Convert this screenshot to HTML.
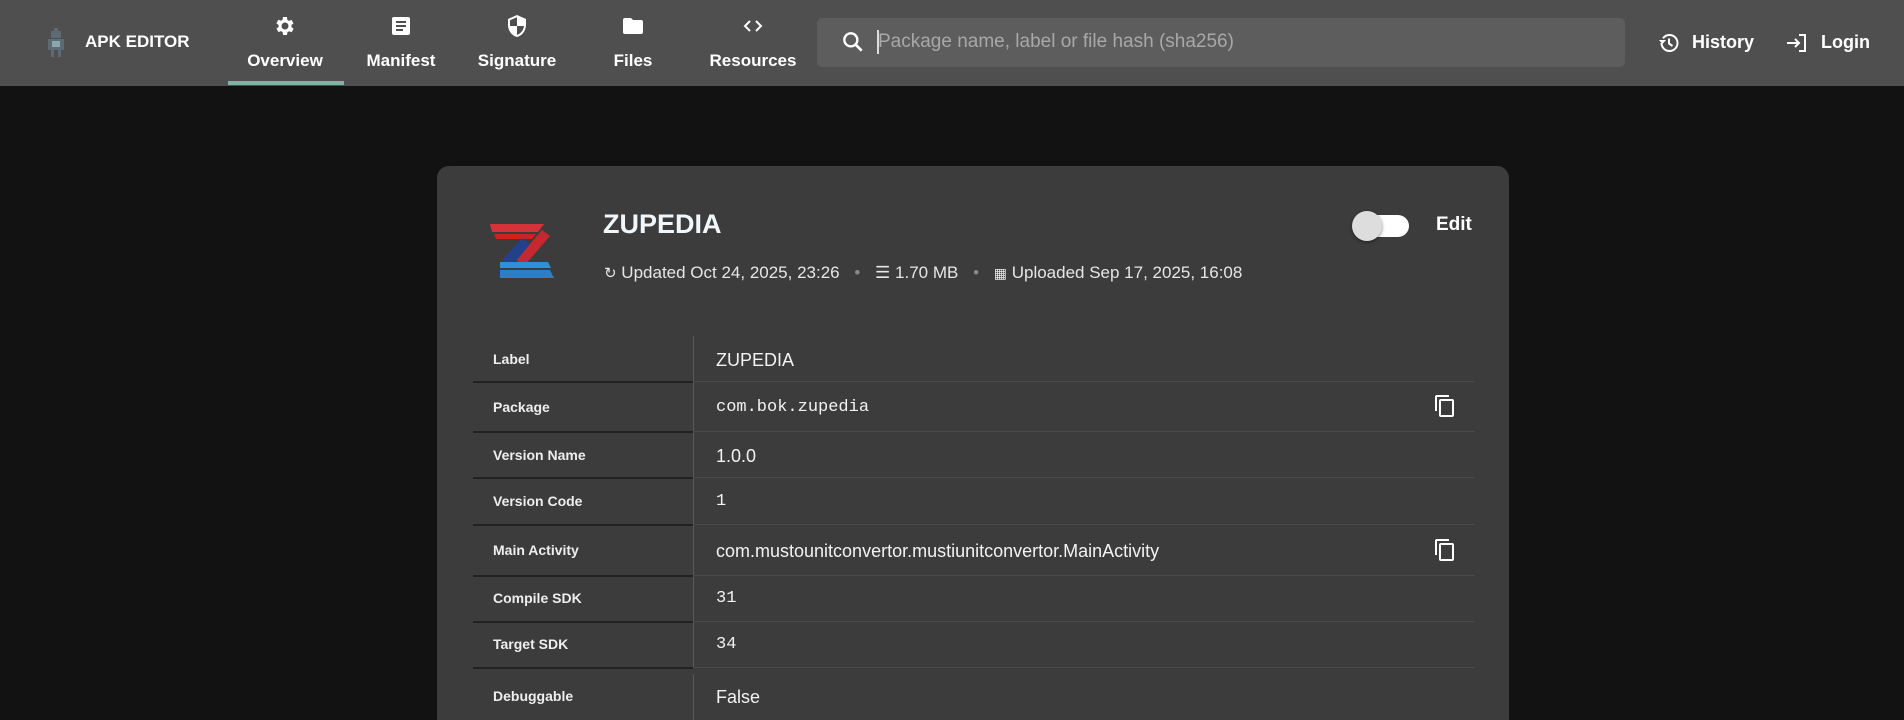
<!DOCTYPE html>
<html><head><meta charset="utf-8"><style>
*{box-sizing:border-box;margin:0;padding:0}
html{width:1904px;height:720px;overflow:hidden}
body{width:1904px;height:720px;overflow:hidden;background:#121212;font-family:"Liberation Sans",sans-serif;color:#fff;position:relative}
.hdr{position:absolute;left:0;top:0;width:1904px;height:86px;background:#4f4f4f}
.abs{position:absolute}
.nav{position:absolute;top:14px;width:120px;text-align:center;font-weight:bold;font-size:17px}
.nav svg{display:block;margin:0 auto 13px}
.search{position:absolute;left:817px;top:18px;width:808px;height:49px;background:#5d5d5d;border-radius:5px}
.card{position:absolute;left:437px;top:166px;width:1072px;height:554px;background:#3c3c3c;border-radius:12px 12px 0 0}
.row{position:absolute;left:473px;width:1002px}
.lab{position:absolute;left:20px;font-size:14px;font-weight:bold;color:#eee}
.val{position:absolute;left:243px;font-size:18px;color:#f2f2f2}
.mono{font-family:"Liberation Mono",monospace;font-size:17px}
.bl{position:absolute;left:0;width:220px;height:2px;background:#222}
.br{position:absolute;left:220px;width:782px;height:1px;background:#4a4a4a}
</style></head><body>
<div class="hdr"></div>
<svg class="abs" style="left:47px;top:28px" width="18" height="30" viewBox="0 0 18 30"><rect x="7" y="0" width="4" height="3" fill="#5e6a74"/><rect x="4" y="3" width="10" height="7" fill="#5e6a74"/><rect x="1" y="11" width="16" height="11" fill="#5e6a74"/><rect x="5" y="13" width="8" height="6" fill="#8aa"/><rect x="4" y="22" width="3" height="7" fill="#5e6a74"/><rect x="11" y="22" width="3" height="7" fill="#5e6a74"/></svg>
<div class="abs" style="left:85px;top:32px;font-size:17px;font-weight:bold">APK EDITOR</div>

<div class="nav" style="left:225px"><svg width="24" height="24" viewBox="0 0 24 24"><path fill="#fff" d="M19.4 13a7.5 7.5 0 000-2l2.1-1.6-2-3.5-2.5 1a7 7 0 00-1.7-1L15 3h-4l-.4 2.8a7 7 0 00-1.7 1l-2.5-1-2 3.5L6.6 11a7.5 7.5 0 000 2l-2.1 1.6 2 3.5 2.5-1a7 7 0 001.7 1L11 21h4l.4-2.8a7 7 0 001.7-1l2.5 1 2-3.5zM13 15.5a3.5 3.5 0 110-7 3.5 3.5 0 010 7z" transform="translate(-1 0)"/></svg>Overview</div>
<div class="abs" style="left:228px;top:81px;width:116px;height:4px;background:#7ab5a6"></div>
<div class="nav" style="left:341px"><svg width="24" height="24" viewBox="0 0 24 24"><path fill="#fff" d="M5 3h14a2 2 0 012 2v14a2 2 0 01-2 2H5a2 2 0 01-2-2V5a2 2 0 012-2zm2 4v2h10V7zm0 4v2h10v-2zm0 4v2h7v-2z"/></svg>Manifest</div>
<div class="nav" style="left:457px"><svg width="24" height="24" viewBox="0 0 24 24"><path fill="#fff" d="M12 1L3 5v6c0 5.5 3.8 10.7 9 12 5.2-1.3 9-6.5 9-12V5zm0 11h7c-.5 4.1-3.3 7.8-7 8.9zM12 12H5V6.3l7-3.1z"/></svg>Signature</div>
<div class="nav" style="left:573px"><svg width="24" height="24" viewBox="0 0 24 24"><path fill="#fff" d="M10 4H4a2 2 0 00-2 2v12a2 2 0 002 2h16a2 2 0 002-2V8a2 2 0 00-2-2h-8z"/></svg>Files</div>
<div class="nav" style="left:693px"><svg width="24" height="24" viewBox="0 0 24 24"><path fill="none" stroke="#fff" stroke-width="2" d="M9 7l-5 5 5 5M15 7l5 5-5 5"/></svg>Resources</div>

<div class="search"></div>
<svg class="abs" style="left:840px;top:29px" width="26" height="26" viewBox="0 0 24 24"><circle cx="10" cy="10" r="6" fill="none" stroke="#fff" stroke-width="2.2"/><path d="M14.5 14.5L20 20" stroke="#fff" stroke-width="2.4"/></svg>
<div class="abs" style="left:877px;top:30px;width:2px;height:24px;background:#ddd"></div>
<div class="abs" style="left:878px;top:31px;font-size:19px;color:#a8a8a8">Package name, label or file hash (sha256)</div>

<svg class="abs" style="left:1657px;top:31px" width="24" height="24" viewBox="0 0 24 24"><path fill="none" stroke="#fff" stroke-width="2" d="M4.5 12a8 8 0 108-8 8 8 0 00-6.5 3.3"/><path fill="#fff" d="M2 9l3.5 4L9 9z"/><path fill="none" stroke="#fff" stroke-width="2" d="M12 7.5v5l3.5 2.5"/></svg>
<div class="abs" style="left:1692px;top:32px;font-size:18px;font-weight:bold">History</div>
<svg class="abs" style="left:1785px;top:31px" width="24" height="24" viewBox="0 0 24 24"><path fill="none" stroke="#fff" stroke-width="2" d="M2 12h12M10 8l4 4-4 4M14 4h6v16h-6"/></svg>
<div class="abs" style="left:1821px;top:32px;font-size:18px;font-weight:bold">Login</div>

<div class="card"></div>
<svg class="abs" style="left:486px;top:222px" width="72" height="60" viewBox="0 0 72 60"><path d="M4 2h54l-6 8H6z" fill="#d5333a"/><path d="M8 12h42l-4 5H10z" fill="#c22"/><path d="M56 8l8 6-26 30-8-6z" fill="#c5282f"/><path d="M36 16l8 6-18 22-10-6z" fill="#23408a"/><path d="M14 40h48l3 6H14z" fill="#2f8fd8"/><path d="M14 48h50l4 8H14z" fill="#2a7fcc"/></svg>
<div class="abs" style="left:603px;top:209px;font-size:27px;font-weight:bold;color:#f0f6fa">ZUPEDIA</div>
<div class="abs" style="left:604px;top:263px;font-size:17px;color:#e6e6e6;white-space:nowrap">
<span style="font-size:15px">&#x21bb;</span> Updated Oct 24, 2025, 23:26 <span style="color:#888;margin:0 10px">•</span> <span>&#x2630;</span> 1.70 MB <span style="color:#888;margin:0 10px">•</span> <span style="font-size:14px">&#x25A6;</span> Uploaded Sep 17, 2025, 16:08</div>
<div class="abs" style="left:1359px;top:215px;width:50px;height:22px;border-radius:11px;background:#fff"></div>
<div class="abs" style="left:1352px;top:211px;width:30px;height:30px;border-radius:15px;background:#ddd;box-shadow:0 1px 3px rgba(0,0,0,.5)"></div>
<div class="abs" style="left:1436px;top:214px;font-size:19px;font-weight:bold">Edit</div>

<div class="abs" style="left:693px;top:336px;width:1px;height:332px;background:#5a5a5a"></div>
<div class="abs" style="left:693px;top:674px;width:1px;height:46px;background:#5a5a5a"></div>

<div class="row" style="top:336px"><div class="lab" style="top:15px">Label</div><div class="val" style="top:14px">ZUPEDIA</div><div class="bl" style="top:45px"></div><div class="br" style="top:45px"></div></div>
<div class="row" style="top:382px"><div class="lab" style="top:17px">Package</div><div class="val mono" style="top:16px">com.bok.zupedia</div><div class="bl" style="top:49px"></div><div class="br" style="top:49px"></div></div>
<div class="row" style="top:432px"><div class="lab" style="top:15px">Version Name</div><div class="val" style="top:14px">1.0.0</div><div class="bl" style="top:45px"></div><div class="br" style="top:45px"></div></div>
<div class="row" style="top:478px"><div class="lab" style="top:15px">Version Code</div><div class="val mono" style="top:14px">1</div><div class="bl" style="top:46px"></div><div class="br" style="top:46px"></div></div>
<div class="row" style="top:525px"><div class="lab" style="top:17px">Main Activity</div><div class="val" style="top:16px">com.mustounitconvertor.mustiunitconvertor.MainActivity</div><div class="bl" style="top:50px"></div><div class="br" style="top:50px"></div></div>
<div class="row" style="top:576px"><div class="lab" style="top:14px">Compile SDK</div><div class="val mono" style="top:13px">31</div><div class="bl" style="top:45px"></div><div class="br" style="top:45px"></div></div>
<div class="row" style="top:622px"><div class="lab" style="top:14px">Target SDK</div><div class="val mono" style="top:13px">34</div><div class="bl" style="top:45px"></div><div class="br" style="top:45px"></div></div>
<div class="row" style="top:668px"><div class="lab" style="top:20px">Debuggable</div><div class="val" style="top:19px">False</div></div>

<svg class="abs" style="left:1433px;top:394px" width="24" height="24" viewBox="0 0 24 24"><path fill="#fff" d="M16 1H4a2 2 0 00-2 2v14h2V3h12zm3 4H8a2 2 0 00-2 2v14a2 2 0 002 2h11a2 2 0 002-2V7a2 2 0 00-2-2zm0 16H8V7h11z"/></svg>
<svg class="abs" style="left:1433px;top:538px" width="24" height="24" viewBox="0 0 24 24"><path fill="#fff" d="M16 1H4a2 2 0 00-2 2v14h2V3h12zm3 4H8a2 2 0 00-2 2v14a2 2 0 002 2h11a2 2 0 002-2V7a2 2 0 00-2-2zm0 16H8V7h11z"/></svg>
</body></html>
